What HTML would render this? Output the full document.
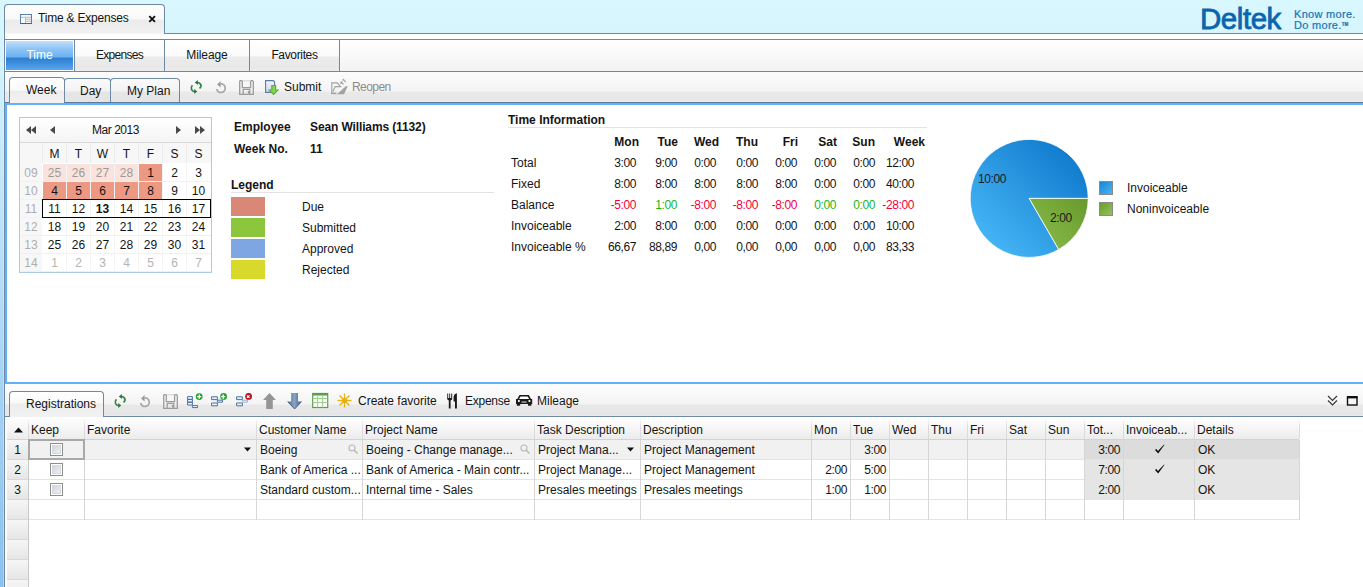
<!DOCTYPE html>
<html><head><meta charset="utf-8"><style>
*{box-sizing:border-box;margin:0;padding:0}
html,body{width:1363px;height:587px;overflow:hidden}
body{position:relative;font-family:"Liberation Sans",sans-serif;font-size:12px;color:#141414;
background:linear-gradient(to bottom,#d9f7fe 0px,#d6f5fd 34px,#cdeefc 103px,#bfe3f8 210px,#a8d4f4 373px,#8ac1ee 587px)}
.a{position:absolute}
.t{position:absolute;white-space:nowrap;line-height:14px}
.b{font-weight:bold}
.r{text-align:right}
.c{text-align:center}
.n{letter-spacing:-0.4px}
.nb{background:linear-gradient(to bottom,#ffffff 0,#fafafa 16px,#ececec 17px,#e8e8e8 28px,#efefef 31px)}
.tab{border:1px solid #6d89a6;border-bottom:none;border-radius:4px 4px 0 0;background:linear-gradient(to bottom,#fafafa 0,#f3f3f3 12px,#e6e6e6 13px,#e4e4e4 25px)}
</style></head><body>
<div class="a" style="left:4px;top:4px;width:161px;height:30px;border:1px solid #6d89a6;border-bottom:none;border-radius:4px 4px 0 0;background:linear-gradient(to bottom,#fdfdfd 0,#f9f9f9 14px,#ebebeb 15px,#efefef 25px,#f5f5f5 29px)"></div>
<div class="t " style="left:38px;top:11px;letter-spacing:-0.2px;">Time &amp; Expenses</div>
<div class="a" style="left:164px;top:33px;width:1199px;height:1px;background:#6d89a6;"></div>
<div class="t" style="left:1200px;top:1px;font-size:29.5px;line-height:36px;color:#0b65ad;-webkit-text-stroke:0.8px #0b65ad;letter-spacing:-0.45px">Deltek</div>
<div class="t" style="left:1294px;top:9px;font-size:11px;line-height:11px;color:#1a72b6;letter-spacing:0.3px;-webkit-text-stroke:0.2px #1a72b6">Know more.</div>
<div class="t" style="left:1294px;top:20px;font-size:11px;line-height:11px;color:#1a72b6;letter-spacing:0.3px;-webkit-text-stroke:0.2px #1a72b6">Do more.<span style="font-size:4.5px;line-height:5px;vertical-align:3px;letter-spacing:0;font-weight:bold">TM</span></div>
<div class="a" style="left:5px;top:34px;width:1358px;height:5px;background:#fff;"></div>
<div class="a" style="left:4px;top:34px;width:1px;height:553px;background:#6d89a6;"></div>
<div class="a" style="left:3px;top:34px;width:1px;height:553px;background:rgba(255,255,255,0.3);"></div>
<div class="a" style="left:5px;top:39px;width:1358px;height:33px;border-top:1px solid #6d89a6;border-bottom:1px solid #6d89a6;background:linear-gradient(to bottom,#ffffff,#f2f2f2)"></div>
<div class="a" style="left:5px;top:40px;width:69px;height:31px;border:1px solid #fff;background:linear-gradient(to bottom,#c4e0fa 0,#8cc4f6 8px,#6db2f2 16px,#2f7fd2 17px,#3d8ddc 22px,#5eaaf2 30px)"></div>
<div class="t c" style="left:5px;top:48px;width:69px;color:#fff;">Time</div>
<div class="a nb" style="left:75px;top:40px;width:89px;height:31px"></div>
<div class="t c" style="left:75px;top:48px;width:89px;letter-spacing:-0.7px;">Expenses</div>
<div class="a nb" style="left:165px;top:40px;width:84px;height:31px"></div>
<div class="t c" style="left:165px;top:48px;width:84px;letter-spacing:-0.1px;">Mileage</div>
<div class="a nb" style="left:250px;top:40px;width:89px;height:31px"></div>
<div class="t c" style="left:250px;top:48px;width:89px;letter-spacing:-0.35px;">Favorites</div>
<div class="a" style="left:74px;top:40px;width:1px;height:31px;background:#6d89a6;"></div>
<div class="a" style="left:164px;top:40px;width:1px;height:31px;background:#6d89a6;"></div>
<div class="a" style="left:249px;top:40px;width:1px;height:31px;background:#6d89a6;"></div>
<div class="a" style="left:339px;top:40px;width:1px;height:31px;background:#6d89a6;"></div>
<div class="a" style="left:5px;top:72px;width:1358px;height:31px;border-bottom:1px solid #5d7b9b;background:linear-gradient(to bottom,#fcfcfc 0,#f4f4f4 19px,#e9e9e9 20px,#e8e8e8 29px,#f0f0f0 30px)"></div>
<div class="a tab" style="left:9px;top:77px;width:56px;height:26px;background:linear-gradient(to bottom,#fff 0,#f9f9f9 12px,#ededed 13px,#f2f2f2 25px)"></div>
<div class="t " style="left:26px;top:83px;">Week</div>
<div class="a tab" style="left:64px;top:78px;width:47px;height:24px"></div>
<div class="t " style="left:80px;top:84px;">Day</div>
<div class="a tab" style="left:110px;top:78px;width:70px;height:24px"></div>
<div class="t " style="left:127px;top:84px;">My Plan</div>
<div class="t " style="left:284px;top:80px;">Submit</div>
<div class="t " style="left:352px;top:80px;color:#8c8c8c;letter-spacing:-0.55px;">Reopen</div>
<div class="a" style="left:5px;top:103px;width:1360px;height:281px;border:2px solid #62b0f8;border-right:none;background:#fff"></div>
<div class="a" style="left:19px;top:117px;width:193px;height:156px;background:#fff;border:1px solid #adc9e6"></div>
<div class="a" style="left:20px;top:118px;width:191px;height:24px;background:linear-gradient(to bottom,#ffffff,#f5f5f5);"></div>
<div class="a" style="left:20px;top:142px;width:191px;height:1px;background:#d9d9d9;"></div>
<div class="t c" style="left:20px;top:123px;width:191px;letter-spacing:-0.45px;">Mar 2013</div>
<div class="a" style="left:20px;top:143px;width:191px;height:20px;background:#f7f7f7;"></div>
<div class="a" style="left:42px;top:143px;width:1px;height:20px;background:#ececec;"></div>
<div class="t c" style="left:43px;top:147px;width:23px;">M</div>
<div class="a" style="left:66px;top:143px;width:1px;height:20px;background:#ececec;"></div>
<div class="t c" style="left:67px;top:147px;width:23px;">T</div>
<div class="a" style="left:90px;top:143px;width:1px;height:20px;background:#ececec;"></div>
<div class="t c" style="left:91px;top:147px;width:23px;">W</div>
<div class="a" style="left:114px;top:143px;width:1px;height:20px;background:#ececec;"></div>
<div class="t c" style="left:115px;top:147px;width:23px;">T</div>
<div class="a" style="left:138px;top:143px;width:1px;height:20px;background:#ececec;"></div>
<div class="t c" style="left:139px;top:147px;width:23px;">F</div>
<div class="a" style="left:162px;top:143px;width:1px;height:20px;background:#ececec;"></div>
<div class="t c" style="left:163px;top:147px;width:23px;">S</div>
<div class="a" style="left:186px;top:143px;width:1px;height:20px;background:#ececec;"></div>
<div class="t c" style="left:187px;top:147px;width:23px;">S</div>
<div class="a" style="left:20px;top:163px;width:22px;height:109px;background:#f7f7f7;"></div>
<div class="a" style="left:20px;top:181px;width:191px;height:1px;background:#f1f1f1;"></div>
<div class="t c" style="left:20px;top:166px;width:22px;color:#aeaeae;">09</div>
<div class="a" style="left:43px;top:164px;width:23px;height:17px;background:#fae3dc;"></div>
<div class="t c " style="left:43px;top:166px;width:23px;color:#9a9a9a;">25</div>
<div class="a" style="left:67px;top:164px;width:23px;height:17px;background:#fae3dc;"></div>
<div class="t c " style="left:67px;top:166px;width:23px;color:#9a9a9a;">26</div>
<div class="a" style="left:91px;top:164px;width:23px;height:17px;background:#fae3dc;"></div>
<div class="t c " style="left:91px;top:166px;width:23px;color:#9a9a9a;">27</div>
<div class="a" style="left:115px;top:164px;width:23px;height:17px;background:#fae3dc;"></div>
<div class="t c " style="left:115px;top:166px;width:23px;color:#9a9a9a;">28</div>
<div class="a" style="left:139px;top:164px;width:23px;height:17px;background:#ec9882;"></div>
<div class="t c " style="left:139px;top:166px;width:23px;color:#141414;">1</div>
<div class="t c " style="left:163px;top:166px;width:23px;color:#141414;">2</div>
<div class="t c " style="left:187px;top:166px;width:23px;color:#141414;">3</div>
<div class="a" style="left:20px;top:199px;width:191px;height:1px;background:#f1f1f1;"></div>
<div class="t c" style="left:20px;top:184px;width:22px;color:#aeaeae;">10</div>
<div class="a" style="left:43px;top:182px;width:23px;height:17px;background:#ec9882;"></div>
<div class="t c " style="left:43px;top:184px;width:23px;color:#141414;">4</div>
<div class="a" style="left:67px;top:182px;width:23px;height:17px;background:#ec9882;"></div>
<div class="t c " style="left:67px;top:184px;width:23px;color:#141414;">5</div>
<div class="a" style="left:91px;top:182px;width:23px;height:17px;background:#ec9882;"></div>
<div class="t c " style="left:91px;top:184px;width:23px;color:#141414;">6</div>
<div class="a" style="left:115px;top:182px;width:23px;height:17px;background:#ec9882;"></div>
<div class="t c " style="left:115px;top:184px;width:23px;color:#141414;">7</div>
<div class="a" style="left:139px;top:182px;width:23px;height:17px;background:#ec9882;"></div>
<div class="t c " style="left:139px;top:184px;width:23px;color:#141414;">8</div>
<div class="t c " style="left:163px;top:184px;width:23px;color:#141414;">9</div>
<div class="t c " style="left:187px;top:184px;width:23px;color:#141414;">10</div>
<div class="a" style="left:20px;top:217px;width:191px;height:1px;background:#f1f1f1;"></div>
<div class="t c" style="left:20px;top:202px;width:22px;color:#aeaeae;">11</div>
<div class="t c " style="left:43px;top:202px;width:23px;color:#141414;">11</div>
<div class="t c " style="left:67px;top:202px;width:23px;color:#141414;">12</div>
<div class="t c b" style="left:91px;top:202px;width:23px;color:#141414;">13</div>
<div class="t c " style="left:115px;top:202px;width:23px;color:#141414;">14</div>
<div class="t c " style="left:139px;top:202px;width:23px;color:#141414;">15</div>
<div class="t c " style="left:163px;top:202px;width:23px;color:#141414;">16</div>
<div class="t c " style="left:187px;top:202px;width:23px;color:#141414;">17</div>
<div class="a" style="left:20px;top:235px;width:191px;height:1px;background:#f1f1f1;"></div>
<div class="t c" style="left:20px;top:220px;width:22px;color:#aeaeae;">12</div>
<div class="t c " style="left:43px;top:220px;width:23px;color:#141414;">18</div>
<div class="t c " style="left:67px;top:220px;width:23px;color:#141414;">19</div>
<div class="t c " style="left:91px;top:220px;width:23px;color:#141414;">20</div>
<div class="t c " style="left:115px;top:220px;width:23px;color:#141414;">21</div>
<div class="t c " style="left:139px;top:220px;width:23px;color:#141414;">22</div>
<div class="t c " style="left:163px;top:220px;width:23px;color:#141414;">23</div>
<div class="t c " style="left:187px;top:220px;width:23px;color:#141414;">24</div>
<div class="a" style="left:20px;top:253px;width:191px;height:1px;background:#f1f1f1;"></div>
<div class="t c" style="left:20px;top:238px;width:22px;color:#aeaeae;">13</div>
<div class="t c " style="left:43px;top:238px;width:23px;color:#141414;">25</div>
<div class="t c " style="left:67px;top:238px;width:23px;color:#141414;">26</div>
<div class="t c " style="left:91px;top:238px;width:23px;color:#141414;">27</div>
<div class="t c " style="left:115px;top:238px;width:23px;color:#141414;">28</div>
<div class="t c " style="left:139px;top:238px;width:23px;color:#141414;">29</div>
<div class="t c " style="left:163px;top:238px;width:23px;color:#141414;">30</div>
<div class="t c " style="left:187px;top:238px;width:23px;color:#141414;">31</div>
<div class="a" style="left:20px;top:271px;width:191px;height:1px;background:#f1f1f1;"></div>
<div class="t c" style="left:20px;top:256px;width:22px;color:#aeaeae;">14</div>
<div class="t c " style="left:43px;top:256px;width:23px;color:#b4b4b4;">1</div>
<div class="t c " style="left:67px;top:256px;width:23px;color:#b4b4b4;">2</div>
<div class="t c " style="left:91px;top:256px;width:23px;color:#b4b4b4;">3</div>
<div class="t c " style="left:115px;top:256px;width:23px;color:#b4b4b4;">4</div>
<div class="t c " style="left:139px;top:256px;width:23px;color:#b4b4b4;">5</div>
<div class="t c " style="left:163px;top:256px;width:23px;color:#b4b4b4;">6</div>
<div class="t c " style="left:187px;top:256px;width:23px;color:#b4b4b4;">7</div>
<div class="a" style="left:66px;top:164px;width:1px;height:108px;background:#f4f4f4;"></div>
<div class="a" style="left:90px;top:164px;width:1px;height:108px;background:#f4f4f4;"></div>
<div class="a" style="left:114px;top:164px;width:1px;height:108px;background:#f4f4f4;"></div>
<div class="a" style="left:138px;top:164px;width:1px;height:108px;background:#f4f4f4;"></div>
<div class="a" style="left:162px;top:164px;width:1px;height:108px;background:#f4f4f4;"></div>
<div class="a" style="left:186px;top:164px;width:1px;height:108px;background:#f4f4f4;"></div>
<div class="a" style="left:42px;top:199px;width:169px;height:19px;background:transparent;border:1px solid #000;border-top-width:1.5px"></div>
<div class="t b" style="left:234px;top:120px;">Employee</div>
<div class="t b" style="left:310px;top:120px;letter-spacing:-0.12px;">Sean Williams (1132)</div>
<div class="t b" style="left:234px;top:142px;">Week No.</div>
<div class="t b" style="left:310px;top:142px;">11</div>
<div class="t b" style="left:231px;top:178px;">Legend</div>
<div class="a" style="left:231px;top:192px;width:263px;height:1px;background:#e3e3e3;"></div>
<div class="a" style="left:231px;top:197px;width:34px;height:19px;background:#d98878;"></div>
<div class="t " style="left:302px;top:200px;">Due</div>
<div class="a" style="left:231px;top:218px;width:34px;height:19px;background:#8cc63c;"></div>
<div class="t " style="left:302px;top:221px;">Submitted</div>
<div class="a" style="left:231px;top:239px;width:34px;height:19px;background:#7da6e2;"></div>
<div class="t " style="left:302px;top:242px;">Approved</div>
<div class="a" style="left:231px;top:260px;width:34px;height:19px;background:#d9d92c;"></div>
<div class="t " style="left:302px;top:263px;">Rejected</div>
<div class="t b" style="left:508px;top:113px;">Time Information</div>
<div class="a" style="left:508px;top:127px;width:419px;height:1px;background:#e3e3e3;"></div>
<div class="t b r" style="left:579px;top:135px;width:60px;">Mon</div>
<div class="t b r" style="left:618px;top:135px;width:60px;">Tue</div>
<div class="t b r" style="left:659px;top:135px;width:60px;">Wed</div>
<div class="t b r" style="left:698px;top:135px;width:60px;">Thu</div>
<div class="t b r" style="left:738px;top:135px;width:60px;">Fri</div>
<div class="t b r" style="left:777px;top:135px;width:60px;">Sat</div>
<div class="t b r" style="left:815px;top:135px;width:60px;">Sun</div>
<div class="t b r" style="left:865px;top:135px;width:60px;">Week</div>
<div class="t " style="left:511px;top:156px;">Total</div>
<div class="t r n" style="left:576px;top:156px;width:60px;">3:00</div>
<div class="t r n" style="left:617px;top:156px;width:60px;">9:00</div>
<div class="t r n" style="left:656px;top:156px;width:60px;">0:00</div>
<div class="t r n" style="left:698px;top:156px;width:60px;">0:00</div>
<div class="t r n" style="left:737px;top:156px;width:60px;">0:00</div>
<div class="t r n" style="left:776px;top:156px;width:60px;">0:00</div>
<div class="t r n" style="left:815px;top:156px;width:60px;">0:00</div>
<div class="t r n" style="left:854px;top:156px;width:60px;">12:00</div>
<div class="t " style="left:511px;top:177px;">Fixed</div>
<div class="t r n" style="left:576px;top:177px;width:60px;">8:00</div>
<div class="t r n" style="left:617px;top:177px;width:60px;">8:00</div>
<div class="t r n" style="left:656px;top:177px;width:60px;">8:00</div>
<div class="t r n" style="left:698px;top:177px;width:60px;">8:00</div>
<div class="t r n" style="left:737px;top:177px;width:60px;">8:00</div>
<div class="t r n" style="left:776px;top:177px;width:60px;">0:00</div>
<div class="t r n" style="left:815px;top:177px;width:60px;">0:00</div>
<div class="t r n" style="left:854px;top:177px;width:60px;">40:00</div>
<div class="t " style="left:511px;top:198px;">Balance</div>
<div class="t r n" style="left:576px;top:198px;width:60px;color:#f2003a;">-5:00</div>
<div class="t r n" style="left:617px;top:198px;width:60px;color:#18b418;">1:00</div>
<div class="t r n" style="left:656px;top:198px;width:60px;color:#f2003a;">-8:00</div>
<div class="t r n" style="left:698px;top:198px;width:60px;color:#f2003a;">-8:00</div>
<div class="t r n" style="left:737px;top:198px;width:60px;color:#f2003a;">-8:00</div>
<div class="t r n" style="left:776px;top:198px;width:60px;color:#18b418;">0:00</div>
<div class="t r n" style="left:815px;top:198px;width:60px;color:#18b418;">0:00</div>
<div class="t r n" style="left:854px;top:198px;width:60px;color:#f2003a;">-28:00</div>
<div class="t " style="left:511px;top:219px;">Invoiceable</div>
<div class="t r n" style="left:576px;top:219px;width:60px;">2:00</div>
<div class="t r n" style="left:617px;top:219px;width:60px;">8:00</div>
<div class="t r n" style="left:656px;top:219px;width:60px;">0:00</div>
<div class="t r n" style="left:698px;top:219px;width:60px;">0:00</div>
<div class="t r n" style="left:737px;top:219px;width:60px;">0:00</div>
<div class="t r n" style="left:776px;top:219px;width:60px;">0:00</div>
<div class="t r n" style="left:815px;top:219px;width:60px;">0:00</div>
<div class="t r n" style="left:854px;top:219px;width:60px;">10:00</div>
<div class="t " style="left:511px;top:240px;">Invoiceable %</div>
<div class="t r n" style="left:576px;top:240px;width:60px;">66,67</div>
<div class="t r n" style="left:617px;top:240px;width:60px;">88,89</div>
<div class="t r n" style="left:656px;top:240px;width:60px;">0,00</div>
<div class="t r n" style="left:698px;top:240px;width:60px;">0,00</div>
<div class="t r n" style="left:737px;top:240px;width:60px;">0,00</div>
<div class="t r n" style="left:776px;top:240px;width:60px;">0,00</div>
<div class="t r n" style="left:815px;top:240px;width:60px;">0,00</div>
<div class="t r n" style="left:854px;top:240px;width:60px;">83,33</div>
<svg class="a" style="left:0;top:0" width="1363" height="587" viewBox="0 0 1363 587"><defs><linearGradient id="pb" gradientUnits="userSpaceOnUse" x1="984.2" y1="243.4" x2="1074.2" y2="153.4"><stop offset="0" stop-color="#46b6f6"/><stop offset="1" stop-color="#107acd"/></linearGradient><linearGradient id="pgr" gradientUnits="userSpaceOnUse" x1="1029.2" y1="253.4" x2="1084.2" y2="198.4"><stop offset="0" stop-color="#8cc050"/><stop offset="1" stop-color="#699a2d"/></linearGradient></defs><path d="M1029.2 198.4L1088.2 198.4A59.0 59.0 0 1 0 1058.70 249.50Z" fill="url(#pb)" stroke="#fff" stroke-width="0.8"/><path d="M1029.2 198.4L1088.2 198.4A59.0 59.0 0 0 1 1058.70 249.50Z" fill="url(#pgr)" stroke="#fff" stroke-width="0.8"/></svg>
<div class="t n" style="left:978px;top:172px;color:#1a1a1a;">10:00</div>
<div class="t n" style="left:1050px;top:211px;color:#1a1a1a;">2:00</div>
<div class="a" style="left:1099px;top:181px;width:14px;height:14px;background:linear-gradient(135deg,#1a84d4,#48b6f4);border:1px solid #8a8a8a"></div>
<div class="a" style="left:1099px;top:202px;width:14px;height:14px;background:linear-gradient(135deg,#6a9c2c,#94c45a);border:1px solid #8a8a8a"></div>
<div class="t " style="left:1127px;top:181px;">Invoiceable</div>
<div class="t " style="left:1127px;top:202px;">Noninvoiceable</div>
<div class="a" style="left:5px;top:384px;width:1358px;height:33px;border-bottom:1px solid #6d89a6;background:linear-gradient(to bottom,#fdfdfd 0,#f4f4f4 20px,#e8e8e8 21px,#e6e6e6 31px,#eeeeee 32px)"></div>
<div class="a tab" style="left:9px;top:391px;width:95px;height:26px;background:linear-gradient(to bottom,#fff 0,#f9f9f9 11px,#ededed 12px,#f2f2f2 25px)"></div>
<div class="t " style="left:26px;top:397px;">Registrations</div>
<div class="t " style="left:358px;top:394px;">Create favorite</div>
<div class="t " style="left:465px;top:394px;letter-spacing:-0.25px;">Expense</div>
<div class="t " style="left:537px;top:394px;">Mileage</div>
<div class="a" style="left:5px;top:417px;width:1358px;height:170px;background:#fff;"></div>
<div class="a" style="left:7px;top:417px;width:1292px;height:22px;background:linear-gradient(to bottom,#ffffff 0,#f6f6f6 50%,#ececec 100%);"></div>
<div class="a" style="left:7px;top:439px;width:1292px;height:1px;background:#d3d3d3;"></div>
<div class="a" style="left:28px;top:417px;width:1px;height:22px;background:linear-gradient(to bottom,rgba(220,220,220,0) 0,rgba(220,220,220,0) 2px,#dadada 10px);"></div>
<div class="t " style="left:31px;top:423px;">Keep</div>
<div class="a" style="left:84px;top:417px;width:1px;height:22px;background:linear-gradient(to bottom,rgba(220,220,220,0) 0,rgba(220,220,220,0) 2px,#dadada 10px);"></div>
<div class="t " style="left:87px;top:423px;">Favorite</div>
<div class="a" style="left:256px;top:417px;width:1px;height:22px;background:linear-gradient(to bottom,rgba(220,220,220,0) 0,rgba(220,220,220,0) 2px,#dadada 10px);"></div>
<div class="t " style="left:259px;top:423px;">Customer Name</div>
<div class="a" style="left:362px;top:417px;width:1px;height:22px;background:linear-gradient(to bottom,rgba(220,220,220,0) 0,rgba(220,220,220,0) 2px,#dadada 10px);"></div>
<div class="t " style="left:365px;top:423px;">Project Name</div>
<div class="a" style="left:534px;top:417px;width:1px;height:22px;background:linear-gradient(to bottom,rgba(220,220,220,0) 0,rgba(220,220,220,0) 2px,#dadada 10px);"></div>
<div class="t " style="left:537px;top:423px;">Task Description</div>
<div class="a" style="left:640px;top:417px;width:1px;height:22px;background:linear-gradient(to bottom,rgba(220,220,220,0) 0,rgba(220,220,220,0) 2px,#dadada 10px);"></div>
<div class="t " style="left:643px;top:423px;">Description</div>
<div class="a" style="left:811px;top:417px;width:1px;height:22px;background:linear-gradient(to bottom,rgba(220,220,220,0) 0,rgba(220,220,220,0) 2px,#dadada 10px);"></div>
<div class="t " style="left:814px;top:423px;">Mon</div>
<div class="a" style="left:850px;top:417px;width:1px;height:22px;background:linear-gradient(to bottom,rgba(220,220,220,0) 0,rgba(220,220,220,0) 2px,#dadada 10px);"></div>
<div class="t " style="left:853px;top:423px;">Tue</div>
<div class="a" style="left:889px;top:417px;width:1px;height:22px;background:linear-gradient(to bottom,rgba(220,220,220,0) 0,rgba(220,220,220,0) 2px,#dadada 10px);"></div>
<div class="t " style="left:892px;top:423px;">Wed</div>
<div class="a" style="left:928px;top:417px;width:1px;height:22px;background:linear-gradient(to bottom,rgba(220,220,220,0) 0,rgba(220,220,220,0) 2px,#dadada 10px);"></div>
<div class="t " style="left:931px;top:423px;">Thu</div>
<div class="a" style="left:967px;top:417px;width:1px;height:22px;background:linear-gradient(to bottom,rgba(220,220,220,0) 0,rgba(220,220,220,0) 2px,#dadada 10px);"></div>
<div class="t " style="left:970px;top:423px;">Fri</div>
<div class="a" style="left:1006px;top:417px;width:1px;height:22px;background:linear-gradient(to bottom,rgba(220,220,220,0) 0,rgba(220,220,220,0) 2px,#dadada 10px);"></div>
<div class="t " style="left:1009px;top:423px;">Sat</div>
<div class="a" style="left:1045px;top:417px;width:1px;height:22px;background:linear-gradient(to bottom,rgba(220,220,220,0) 0,rgba(220,220,220,0) 2px,#dadada 10px);"></div>
<div class="t " style="left:1048px;top:423px;">Sun</div>
<div class="a" style="left:1084px;top:417px;width:1px;height:22px;background:linear-gradient(to bottom,rgba(220,220,220,0) 0,rgba(220,220,220,0) 2px,#dadada 10px);"></div>
<div class="t " style="left:1087px;top:423px;">Tot...</div>
<div class="a" style="left:1123px;top:417px;width:1px;height:22px;background:linear-gradient(to bottom,rgba(220,220,220,0) 0,rgba(220,220,220,0) 2px,#dadada 10px);"></div>
<div class="t " style="left:1126px;top:423px;">Invoiceab...</div>
<div class="a" style="left:1194px;top:417px;width:1px;height:22px;background:linear-gradient(to bottom,rgba(220,220,220,0) 0,rgba(220,220,220,0) 2px,#dadada 10px);"></div>
<div class="t " style="left:1197px;top:423px;">Details</div>
<div class="a" style="left:1299px;top:417px;width:1px;height:22px;background:linear-gradient(to bottom,rgba(220,220,220,0) 0,rgba(220,220,220,0) 2px,#dadada 10px);"></div>
<div class="a" style="left:7px;top:440px;width:21px;height:147px;background:repeating-linear-gradient(to bottom,#f6f6f6 0,#e6e6e6 19px,#d8d8d8 19px,#d8d8d8 20px);"></div>
<div class="a" style="left:28px;top:440px;width:1px;height:147px;background:#c8c8c8;"></div>
<div class="a" style="left:29px;top:440px;width:1270px;height:19px;background:#f1f1f1;"></div>
<div class="a" style="left:1085px;top:440px;width:214px;height:19px;background:#dcdcdc;"></div>
<div class="a" style="left:29px;top:459px;width:1270px;height:1px;background:#e4e4e4;"></div>
<div class="t c" style="left:7px;top:443px;width:21px;">1</div>
<div class="a" style="left:50px;top:443px;width:13px;height:13px;background:linear-gradient(135deg,#c6ceda,#f7f7f7);border:1px solid #8e8e8e;box-shadow:inset 0 0 0 1px #fff,inset 0 0 0 2px #d6dae0"></div>
<div class="a" style="left:84px;top:440px;width:1px;height:20px;background:#d6d6d6;"></div>
<div class="a" style="left:256px;top:440px;width:1px;height:20px;background:#d6d6d6;"></div>
<div class="t " style="left:260px;top:443px;">Boeing</div>
<div class="a" style="left:362px;top:440px;width:1px;height:20px;background:#d6d6d6;"></div>
<div class="t " style="left:366px;top:443px;">Boeing - Change manage...</div>
<div class="a" style="left:534px;top:440px;width:1px;height:20px;background:#d6d6d6;"></div>
<div class="t " style="left:538px;top:443px;">Project Mana...</div>
<div class="a" style="left:640px;top:440px;width:1px;height:20px;background:#d6d6d6;"></div>
<div class="t " style="left:644px;top:443px;">Project Management</div>
<div class="a" style="left:811px;top:440px;width:1px;height:20px;background:#d6d6d6;"></div>
<div class="a" style="left:850px;top:440px;width:1px;height:20px;background:#d6d6d6;"></div>
<div class="t r n" style="left:850px;top:443px;width:36px;">3:00</div>
<div class="a" style="left:889px;top:440px;width:1px;height:20px;background:#d6d6d6;"></div>
<div class="a" style="left:928px;top:440px;width:1px;height:20px;background:#d6d6d6;"></div>
<div class="a" style="left:967px;top:440px;width:1px;height:20px;background:#d6d6d6;"></div>
<div class="a" style="left:1006px;top:440px;width:1px;height:20px;background:#d6d6d6;"></div>
<div class="a" style="left:1045px;top:440px;width:1px;height:20px;background:#d6d6d6;"></div>
<div class="a" style="left:1084px;top:440px;width:1px;height:20px;background:#d6d6d6;"></div>
<div class="t r n" style="left:1084px;top:443px;width:36px;">3:00</div>
<div class="a" style="left:1123px;top:440px;width:1px;height:20px;background:#d6d6d6;"></div>
<div class="a" style="left:1194px;top:440px;width:1px;height:20px;background:#d6d6d6;"></div>
<div class="t " style="left:1198px;top:443px;">OK</div>
<div class="a" style="left:1085px;top:460px;width:214px;height:19px;background:#e5e5e5;"></div>
<div class="a" style="left:29px;top:479px;width:1270px;height:1px;background:#e4e4e4;"></div>
<div class="t c" style="left:7px;top:463px;width:21px;">2</div>
<div class="a" style="left:50px;top:463px;width:13px;height:13px;background:linear-gradient(135deg,#c6ceda,#f7f7f7);border:1px solid #8e8e8e;box-shadow:inset 0 0 0 1px #fff,inset 0 0 0 2px #d6dae0"></div>
<div class="a" style="left:84px;top:460px;width:1px;height:20px;background:#d6d6d6;"></div>
<div class="a" style="left:256px;top:460px;width:1px;height:20px;background:#d6d6d6;"></div>
<div class="t " style="left:260px;top:463px;">Bank of America ...</div>
<div class="a" style="left:362px;top:460px;width:1px;height:20px;background:#d6d6d6;"></div>
<div class="t " style="left:366px;top:463px;">Bank of America - Main contr...</div>
<div class="a" style="left:534px;top:460px;width:1px;height:20px;background:#d6d6d6;"></div>
<div class="t " style="left:538px;top:463px;">Project Manage...</div>
<div class="a" style="left:640px;top:460px;width:1px;height:20px;background:#d6d6d6;"></div>
<div class="t " style="left:644px;top:463px;">Project Management</div>
<div class="a" style="left:811px;top:460px;width:1px;height:20px;background:#d6d6d6;"></div>
<div class="t r n" style="left:811px;top:463px;width:36px;">2:00</div>
<div class="a" style="left:850px;top:460px;width:1px;height:20px;background:#d6d6d6;"></div>
<div class="t r n" style="left:850px;top:463px;width:36px;">5:00</div>
<div class="a" style="left:889px;top:460px;width:1px;height:20px;background:#d6d6d6;"></div>
<div class="a" style="left:928px;top:460px;width:1px;height:20px;background:#d6d6d6;"></div>
<div class="a" style="left:967px;top:460px;width:1px;height:20px;background:#d6d6d6;"></div>
<div class="a" style="left:1006px;top:460px;width:1px;height:20px;background:#d6d6d6;"></div>
<div class="a" style="left:1045px;top:460px;width:1px;height:20px;background:#d6d6d6;"></div>
<div class="a" style="left:1084px;top:460px;width:1px;height:20px;background:#d6d6d6;"></div>
<div class="t r n" style="left:1084px;top:463px;width:36px;">7:00</div>
<div class="a" style="left:1123px;top:460px;width:1px;height:20px;background:#d6d6d6;"></div>
<div class="a" style="left:1194px;top:460px;width:1px;height:20px;background:#d6d6d6;"></div>
<div class="t " style="left:1198px;top:463px;">OK</div>
<div class="a" style="left:1085px;top:480px;width:214px;height:19px;background:#e5e5e5;"></div>
<div class="a" style="left:29px;top:499px;width:1270px;height:1px;background:#e4e4e4;"></div>
<div class="t c" style="left:7px;top:483px;width:21px;">3</div>
<div class="a" style="left:50px;top:483px;width:13px;height:13px;background:linear-gradient(135deg,#c6ceda,#f7f7f7);border:1px solid #8e8e8e;box-shadow:inset 0 0 0 1px #fff,inset 0 0 0 2px #d6dae0"></div>
<div class="a" style="left:84px;top:480px;width:1px;height:20px;background:#d6d6d6;"></div>
<div class="a" style="left:256px;top:480px;width:1px;height:20px;background:#d6d6d6;"></div>
<div class="t " style="left:260px;top:483px;">Standard custom...</div>
<div class="a" style="left:362px;top:480px;width:1px;height:20px;background:#d6d6d6;"></div>
<div class="t " style="left:366px;top:483px;">Internal time - Sales</div>
<div class="a" style="left:534px;top:480px;width:1px;height:20px;background:#d6d6d6;"></div>
<div class="t " style="left:538px;top:483px;">Presales meetings</div>
<div class="a" style="left:640px;top:480px;width:1px;height:20px;background:#d6d6d6;"></div>
<div class="t " style="left:644px;top:483px;">Presales meetings</div>
<div class="a" style="left:811px;top:480px;width:1px;height:20px;background:#d6d6d6;"></div>
<div class="t r n" style="left:811px;top:483px;width:36px;">1:00</div>
<div class="a" style="left:850px;top:480px;width:1px;height:20px;background:#d6d6d6;"></div>
<div class="t r n" style="left:850px;top:483px;width:36px;">1:00</div>
<div class="a" style="left:889px;top:480px;width:1px;height:20px;background:#d6d6d6;"></div>
<div class="a" style="left:928px;top:480px;width:1px;height:20px;background:#d6d6d6;"></div>
<div class="a" style="left:967px;top:480px;width:1px;height:20px;background:#d6d6d6;"></div>
<div class="a" style="left:1006px;top:480px;width:1px;height:20px;background:#d6d6d6;"></div>
<div class="a" style="left:1045px;top:480px;width:1px;height:20px;background:#d6d6d6;"></div>
<div class="a" style="left:1084px;top:480px;width:1px;height:20px;background:#d6d6d6;"></div>
<div class="t r n" style="left:1084px;top:483px;width:36px;">2:00</div>
<div class="a" style="left:1123px;top:480px;width:1px;height:20px;background:#d6d6d6;"></div>
<div class="a" style="left:1194px;top:480px;width:1px;height:20px;background:#d6d6d6;"></div>
<div class="t " style="left:1198px;top:483px;">OK</div>
<div class="a" style="left:29px;top:519px;width:1270px;height:1px;background:#e4e4e4;"></div>
<div class="a" style="left:84px;top:500px;width:1px;height:20px;background:#d6d6d6;"></div>
<div class="a" style="left:256px;top:500px;width:1px;height:20px;background:#d6d6d6;"></div>
<div class="a" style="left:362px;top:500px;width:1px;height:20px;background:#d6d6d6;"></div>
<div class="a" style="left:534px;top:500px;width:1px;height:20px;background:#d6d6d6;"></div>
<div class="a" style="left:640px;top:500px;width:1px;height:20px;background:#d6d6d6;"></div>
<div class="a" style="left:811px;top:500px;width:1px;height:20px;background:#d6d6d6;"></div>
<div class="a" style="left:850px;top:500px;width:1px;height:20px;background:#d6d6d6;"></div>
<div class="a" style="left:889px;top:500px;width:1px;height:20px;background:#d6d6d6;"></div>
<div class="a" style="left:928px;top:500px;width:1px;height:20px;background:#d6d6d6;"></div>
<div class="a" style="left:967px;top:500px;width:1px;height:20px;background:#d6d6d6;"></div>
<div class="a" style="left:1006px;top:500px;width:1px;height:20px;background:#d6d6d6;"></div>
<div class="a" style="left:1045px;top:500px;width:1px;height:20px;background:#d6d6d6;"></div>
<div class="a" style="left:1084px;top:500px;width:1px;height:20px;background:#d6d6d6;"></div>
<div class="a" style="left:1123px;top:500px;width:1px;height:20px;background:#d6d6d6;"></div>
<div class="a" style="left:1194px;top:500px;width:1px;height:20px;background:#d6d6d6;"></div>
<div class="a" style="left:1299px;top:440px;width:1px;height:80px;background:#d6d6d6;"></div>
<div class="a" style="left:28px;top:439px;width:57px;height:21px;background:transparent;border:2px solid #a9a9a9"></div>
<svg class="a" style="left:0;top:0" width="1363" height="587" viewBox="0 0 1363 587">
<rect x="20.5" y="14.5" width="11" height="9" fill="#f6f9fd" stroke="#5a80aa"/><path d="M20 23.5H32" stroke="#3f6590"/><path d="M21 17.3H31M25.5 17.3V23M26 19.3H31M26 21.3H31" stroke="#b4b4b4" stroke-width="0.9" fill="none"/>
<path d="M149.3 16.2L155 21.9M155 16.2L149.3 21.9" stroke="#111" stroke-width="1.9"/>
<g transform="translate(189,79)"><path d="M8 3.3C11.5 3.5 13.5 6.5 10.6 9.5" fill="none" stroke="#2e8646" stroke-width="1.7"/><path d="M5.8 3.4L8.8 0.9V5.9Z" fill="#2a7a3c"/><path d="M6.2 12.6C2.8 12.4 0.8 9.4 3.4 6.3" fill="none" stroke="#2e8646" stroke-width="1.7"/><path d="M8.2 12.6L5.2 10V15Z" fill="#2a7a3c"/></g>
<g transform="translate(216,81)"><path d="M4.8 2.9A4.3 4.3 0 1 1 0.7 8" fill="none" stroke="#a6a6a6" stroke-width="1.7"/><path d="M1.1 3.4L4.6 0V6.6Z" fill="#999"/></g>
<g transform="translate(239,80)" fill="none" stroke="#9c9c9c" stroke-width="1.3"><path d="M3.3 0.7H1.2L0.7 1.2V14.3H14.3V1.4L13.6 0.7H11.6"/><path d="M3.3 0.7H11.6" stroke="#dcdcdc"/><path d="M3.3 0.7V7.7H11.6V0.7"/><path d="M4.2 14.3V9.4H10.8V14.3"/><path d="M8.8 11.8H9.8V13.6" stroke-width="1.5"/></g>
<defs><linearGradient id="pg1" x1="0" y1="0" x2="0" y2="1"><stop offset="0" stop-color="#f2f6fc"/><stop offset="1" stop-color="#c9d9ee"/></linearGradient></defs><path d="M265.6 80.6H273.4L274.6 81.8V92.4H265.6Z" fill="url(#pg1)" stroke="#5b7ba6" stroke-width="1.1"/><path d="M271.2 85H276.2V89.6H279.4L273.6 95.2L267.8 89.6H271.2Z" fill="#5cb227"/><path d="M272.4 86H275V90.4H277L273.6 93.6L270.2 90.4H272.4Z" fill="#8ad35a"/>
<g fill="none" stroke="#a2a2a2" stroke-width="1.15"><path d="M331.8 93.6V82.8H337.2L340.6 86.6H335.2L333 91.6"/><path d="M341 82.2L343.6 84.4M340.6 83.8L341 82.2L342.6 81.9M343.2 79.6L345.8 82M344.2 79.4L343.2 79.6L343.1 80.6"/></g><path d="M331.2 94.2V92.6H336.4L336.4 94.2Z" fill="#a2a2a2"/><path d="M337 94.2L346 86L347.6 86.6L344 94.2Z" fill="#a2a2a2"/>
<path d="M26 130L31 126V134ZM31 130L36 126V134Z" fill="#484848"/>
<path d="M50 130L55 126V134Z" fill="#484848"/>
<path d="M181 130L176 126V134Z" fill="#484848"/>
<path d="M205 130L200 126V134ZM200 130L195 126V134Z" fill="#484848"/>
<g transform="translate(113,393)"><path d="M8 3.3C11.5 3.5 13.5 6.5 10.6 9.5" fill="none" stroke="#2e8646" stroke-width="1.7"/><path d="M5.8 3.4L8.8 0.9V5.9Z" fill="#2a7a3c"/><path d="M6.2 12.6C2.8 12.4 0.8 9.4 3.4 6.3" fill="none" stroke="#2e8646" stroke-width="1.7"/><path d="M8.2 12.6L5.2 10V15Z" fill="#2a7a3c"/></g>
<g transform="translate(140,395)"><path d="M4.8 2.9A4.3 4.3 0 1 1 0.7 8" fill="none" stroke="#a6a6a6" stroke-width="1.7"/><path d="M1.1 3.4L4.6 0V6.6Z" fill="#999"/></g>
<g transform="translate(163,394)" fill="none" stroke="#9c9c9c" stroke-width="1.3"><path d="M3.3 0.7H1.2L0.7 1.2V14.3H14.3V1.4L13.6 0.7H11.6"/><path d="M3.3 0.7H11.6" stroke="#dcdcdc"/><path d="M3.3 0.7V7.7H11.6V0.7"/><path d="M4.2 14.3V9.4H10.8V14.3"/><path d="M8.8 11.8H9.8V13.6" stroke-width="1.5"/></g>
<g transform="translate(187,393)"><path d="M0.6 3.6H5.4V6.4H0.6ZM0.6 6.4H5.4V9.2H0.6ZM0.6 9.2H5.4V12H0.6Z" fill="#eef3fa" stroke="#4a72a4" stroke-width="1"/><path d="M5.4 12.6H10.6V14.6H5.4Z" fill="#eef3fa" stroke="#4a72a4" stroke-width="1"/><circle cx="12.2" cy="3.6" r="3.4" fill="#1fa52a"/><path d="M10.1 3.6H14.3M12.2 1.5V5.7" stroke="#fff" stroke-width="1.4"/></g>
<g transform="translate(211,393)"><path d="M0.6 3.8H6.4V6.6H0.6ZM0.6 10H6.4V12.8H0.6Z" fill="#eef3fa" stroke="#4a72a4" stroke-width="1"/><path d="M6.4 7.2H11.6V9.2H6.4Z" fill="#eef3fa" stroke="#4a72a4" stroke-width="1"/><circle cx="12.6" cy="3.4" r="3.4" fill="#1fa52a"/><path d="M10.1 3.6H14.3M12.2 1.5V5.7" stroke="#fff" stroke-width="1.4"/></g>
<g transform="translate(236,393)"><path d="M0.6 3.8H6.4V6.6H0.6ZM0.6 10H6.4V12.8H0.6Z" fill="#eef3fa" stroke="#4a72a4" stroke-width="1"/><path d="M6.4 7.2H11.6V9.2H6.4Z" fill="#eef3fa" stroke="#9fb6d2" stroke-width="1"/><circle cx="12.6" cy="3.4" r="3.4" fill="#b8141c"/><path d="M10.9 2.3L13.5 4.9M13.5 2.3L10.9 4.9" stroke="#fff" stroke-width="1.2"/></g>
<path d="M269.5 393L276 400H272.8V409H266.2V400H263Z" fill="#959595"/>
<defs><linearGradient id="dg" x1="0" y1="0" x2="1" y2="0"><stop offset="0" stop-color="#4a6c96"/><stop offset="0.5" stop-color="#8aa4c4"/><stop offset="1" stop-color="#3c5a82"/></linearGradient></defs><path d="M291.2 393H298V401.6H301.5L294.6 409L287.6 401.6H291.2Z" fill="url(#dg)"/><path d="M287.6 401.6L294.6 409L301.5 401.6" fill="none" stroke="#2e4a70" stroke-width="0.8"/>
<rect x="312.7" y="393.5" width="15" height="14" fill="#fff" stroke="#5a9e48" stroke-width="1.2"/><rect x="312.7" y="393.5" width="15" height="2" fill="#5a9e48"/><path d="M312.7 398.5H327.7M312.7 402.5H327.7M317.7 395.5V407.5M322.7 395.5V407.5" stroke="#9ccc8c" stroke-width="1"/>
<path d="M351.50 400.50L344.50 400.50" stroke="#e8b010" stroke-width="1.3"/><path d="M349.45 405.45L344.50 400.50" stroke="#e8b010" stroke-width="1.3"/><path d="M344.50 407.50L344.50 400.50" stroke="#e8b010" stroke-width="1.3"/><path d="M339.55 405.45L344.50 400.50" stroke="#e8b010" stroke-width="1.3"/><path d="M337.50 400.50L344.50 400.50" stroke="#e8b010" stroke-width="1.3"/><path d="M339.55 395.55L344.50 400.50" stroke="#e8b010" stroke-width="1.3"/><path d="M344.50 393.50L344.50 400.50" stroke="#e8b010" stroke-width="1.3"/><path d="M349.45 395.55L344.50 400.50" stroke="#e8b010" stroke-width="1.3"/><circle cx="344.5" cy="400.5" r="2.6" fill="#e8b010"/>
<path d="M447.7 393.5V398.5M449.7 393.5V398.5M451.7 393.5V398.5" stroke="#1a1a1a" stroke-width="0.9"/><path d="M447.3 398H452.1V399.4L450.6 400.6V408.6H448.8V400.6L447.3 399.4Z" fill="#1a1a1a"/><path d="M456.9 393.2V408.6H455V401.4H453.6V397.4C453.6 395 455 393.6 456.9 393.2Z" fill="#1a1a1a"/>
<path d="M519.5 395H528.8L531 399H532.2V403.9H516V399H517.3Z" fill="#1a1a1a"/><path d="M520.6 396.4H527.6L529.2 399H519Z" fill="#fff"/><rect x="516.8" y="403.5" width="3.4" height="2.2" fill="#1a1a1a"/><rect x="528" y="403.5" width="3.4" height="2.2" fill="#1a1a1a"/><circle cx="518.9" cy="401" r="1.1" fill="#fff"/><circle cx="529.4" cy="401" r="1.1" fill="#fff"/><rect x="521.6" y="401.6" width="5" height="0.9" fill="#fff"/>
<path d="M1328 396L1332.5 400.5L1337 396M1328 400.5L1332.5 405L1337 400.5" fill="none" stroke="#333" stroke-width="1.1"/>
<rect x="1347.5" y="397" width="9.5" height="8" fill="none" stroke="#111" stroke-width="1.4"/><rect x="1347" y="396" width="10.5" height="2.4" fill="#111"/>
<path d="M14 432.5L18.5 427.5L23 432.5Z" fill="#111"/>
<path d="M244 447.5H251L247.5 451.5Z" fill="#111"/>
<path d="M1154.9 450L1156.4 448.9L1157.9 451L1164.1 444.6L1164.4 445L1158.2 453.6Z" fill="#111"/>
<path d="M1154.9 470L1156.4 468.9L1157.9 471L1164.1 464.6L1164.4 465L1158.2 473.6Z" fill="#111"/>
<path d="M627 447.5H634L630.5 451.5Z" fill="#111"/>
<circle cx="352" cy="448" r="3" fill="none" stroke="#b8b8b8" stroke-width="1.1"/><path d="M354.2 450.2L357.5 453.5" stroke="#b8b8b8" stroke-width="1.5"/>
<circle cx="524" cy="448" r="3" fill="none" stroke="#b8b8b8" stroke-width="1.1"/><path d="M526.2 450.2L529.5 453.5" stroke="#b8b8b8" stroke-width="1.5"/>
</svg>
</body></html>
